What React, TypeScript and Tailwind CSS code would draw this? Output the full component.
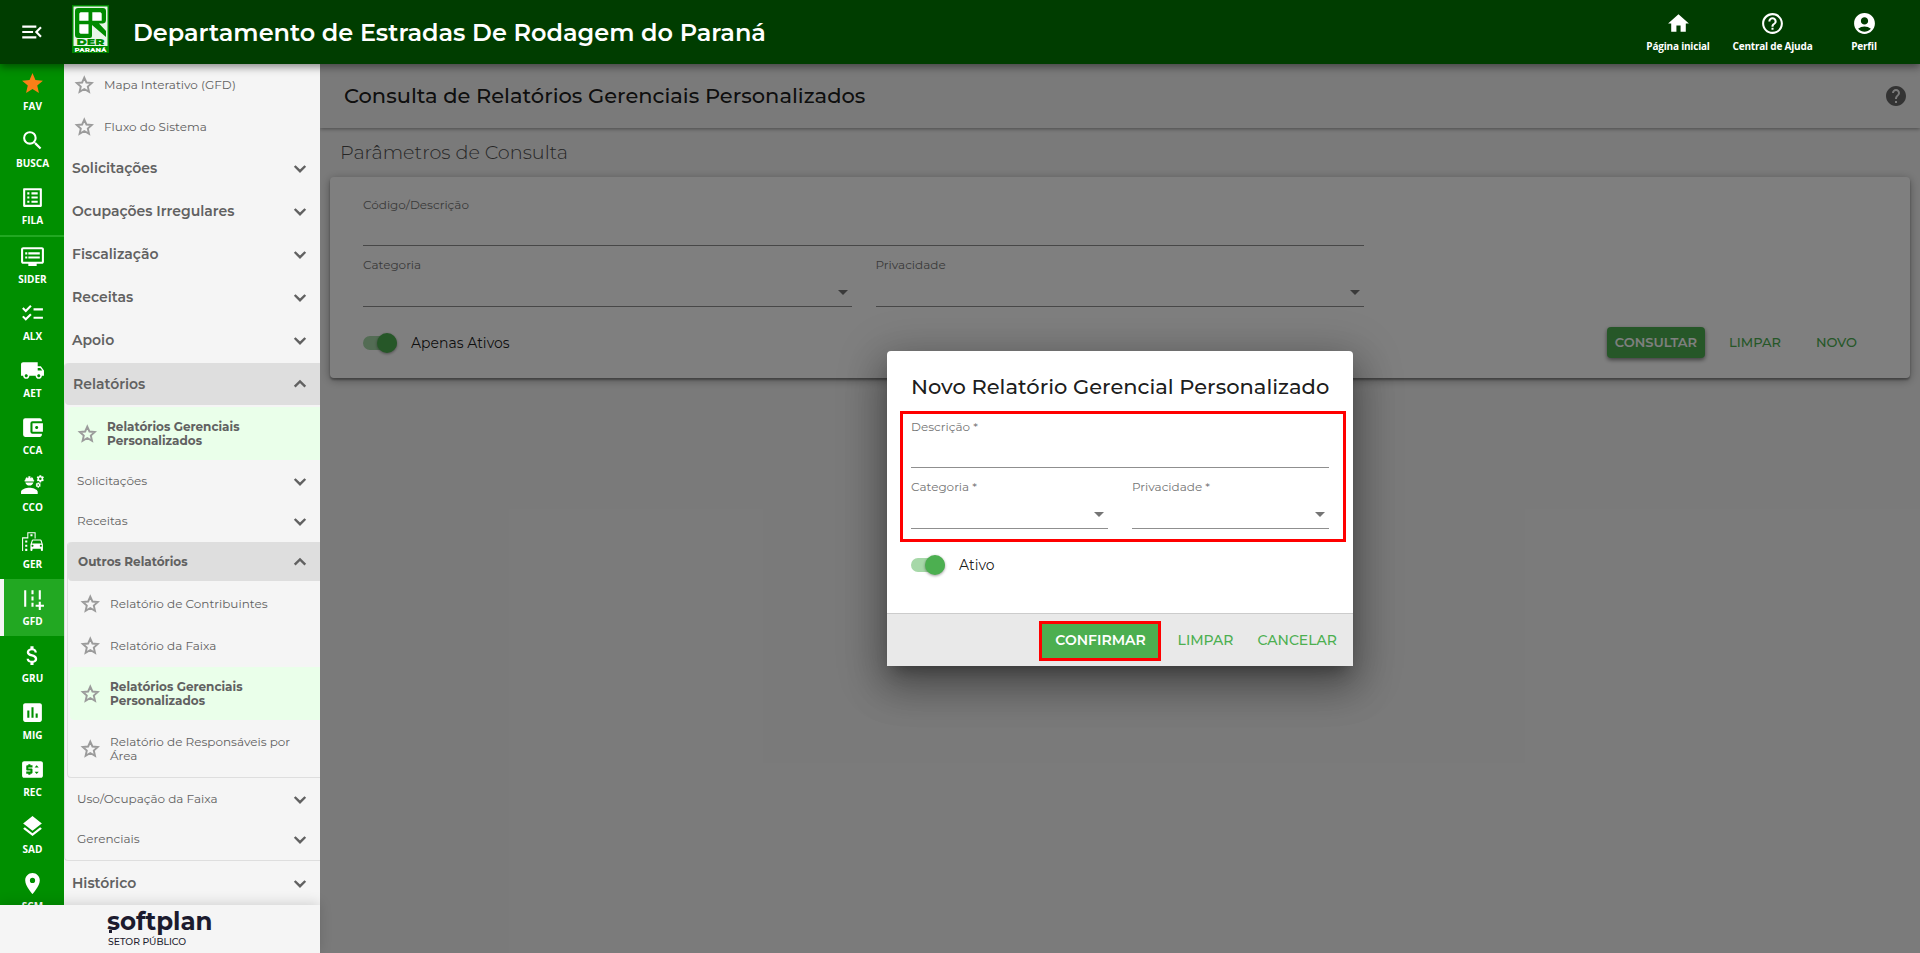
import type { ReactNode } from "react";
import type { IconType } from "react-icons";
import {
  MdAccountBalanceWallet,
  MdAccountCircle,
  MdAddRoad,
  MdArrowDropDown,
  MdAttachMoney,
  MdChecklist,
  MdDvr,
  MdEngineering,
  MdHelp,
  MdHelpOutline,
  MdHome,
  MdInsertChart,
  MdLayers,
  MdListAlt,
  MdLocalShipping,
  MdMenuOpen,
  MdOutlineEmojiTransportation,
  MdPlace,
  MdPriceChange,
  MdSearch,
  MdStar,
} from "react-icons/md";

type RailEntry = { label: string; icon: IconType; active?: boolean; color?: string };

const shortcuts: RailEntry[] = [
  { label: "FAV", icon: MdStar, color: "text-[#fb7f17]" },
  { label: "BUSCA", icon: MdSearch },
  { label: "FILA", icon: MdListAlt },
];

const modules: RailEntry[] = [
  { label: "SIDER", icon: MdDvr },
  { label: "ALX", icon: MdChecklist },
  { label: "AET", icon: MdLocalShipping },
  { label: "CCA", icon: MdAccountBalanceWallet },
  { label: "CCO", icon: MdEngineering },
  { label: "GER", icon: MdOutlineEmojiTransportation },
  { label: "GFD", icon: MdAddRoad, active: true },
  { label: "GRU", icon: MdAttachMoney },
  { label: "MIG", icon: MdInsertChart },
  { label: "REC", icon: MdPriceChange },
  { label: "SAD", icon: MdLayers },
  { label: "SCM", icon: MdPlace },
];

const RailItem = ({ label, icon: Icon, active, color }: RailEntry) => (
  <div
    className={
      active
        ? "flex h-[57px] shrink-0 flex-col items-center border-l-4 border-[#f5f5f5] bg-[#22a822] pt-[7px] pr-[3px]"
        : "flex h-[57px] shrink-0 flex-col items-center pt-[7px] pl-px"
    }
  >
    <Icon className={color ?? "text-white"} size={25} />
    <span className="mt-[3px] font-['Open_Sans',sans-serif] text-[10px] leading-[14px] font-bold text-white">
      {label}
    </span>
  </div>
);

const Chevron = ({ up }: { up?: boolean }) => (
  <svg width="18" height="18" viewBox="0 0 18 18" fill="none" stroke="currentColor" strokeWidth="2.400" className="shrink-0">
    <path d={up ? "M3.700 11.700 9 6.500l5.300 5.200" : "M3.700 7 9 12.200 14.300 7"} />
  </svg>
);

const StarOutline = () => (
  <svg width="20" height="20" viewBox="0 0 20 20" fill="none" stroke="#9b9b9b" strokeWidth="1.900" className="shrink-0">
    <path d="M10.300 2.600l2.150 4.900 5.350.5-4 3.550 1.200 5.200L10.300 14l-4.700 2.750 1.200-5.200-4-3.550 5.350-.5z" />
  </svg>
);

const Logo = () => (
  <svg width="37" height="48" viewBox="0 0 37 48">
    <rect width="37" height="48" fill="#008a00" />
    <path d="M1.500 1.500h34v39.500h-34z" fill="#e9f5e9" />
    <path d="M6 3h25a3 3 0 0 1 3 3v9a3.500 3.500 0 0 1-3 3.500h-4L34 26v6L20 20v11a2 2 0 0 1-2 2H6a3 3 0 0 1-3-3V6a3 3 0 0 1 3-3z" fill="#008a00" />
    <path d="M8.500 7.300h8v8.400H7.300V8.500zM20.300 7.300h8.200l1.200 1.200v7.200h-9.400zM7.300 19.200h9.200v9.600H8.500l-1.200-1.200z" fill="#fff" />
    <text x="18.500" y="40" textAnchor="middle" textLength="28" lengthAdjust="spacingAndGlyphs" fontFamily="Montserrat, Inter, sans-serif" fontSize="9.500" fontWeight="900" fill="#008a00">DER</text>
    <text x="18.500" y="46.500" textAnchor="middle" textLength="32" lengthAdjust="spacingAndGlyphs" fontFamily="Montserrat, Inter, sans-serif" fontSize="5.500" fontWeight="800" fill="#fff">PARANÁ</text>
  </svg>
);

const HeaderAction = ({ icon: Icon, label }: { icon: IconType; label: string }) => (
  <div className="flex flex-col items-center pt-[11px]">
    <Icon size={25} />
    <span className="mt-[3px] font-['Open_Sans',sans-serif] text-[10px] leading-[14px] font-bold tracking-[-0.2px] whitespace-nowrap">
      {label}
    </span>
  </div>
);

const Header = () => (
  <header className="relative z-20 flex h-16 shrink-0 bg-[#003d00] text-white shadow-[0_3px_8px_rgba(0,0,0,0.45)]">
    <div className="flex w-16 items-center justify-center">
      <MdMenuOpen size={26} />
    </div>
    <div className="ml-2 pt-[5px]">
      <Logo />
    </div>
    <h1 className="ml-6 text-2xl leading-[66px] font-semibold">
      Departamento de Estradas De Rodagem do Paraná
    </h1>
    <div className="ml-auto flex">
      <div className="w-[94px]"><HeaderAction icon={MdHome} label="Página inicial" /></div>
      <div className="w-[95px]"><HeaderAction icon={MdHelpOutline} label="Central de Ajuda" /></div>
      <div className="mr-3 w-[88px]"><HeaderAction icon={MdAccountCircle} label="Perfil" /></div>
    </div>
  </header>
);

const Group = ({ label }: { label: string }) => (
  <div className="flex h-[43px] shrink-0 items-center justify-between pr-[11px] pl-2">
    <span className="text-sm font-semibold">{label}</span>
    <Chevron />
  </div>
);

const SubGroup = ({ label }: { label: string }) => (
  <div className="flex h-10 shrink-0 items-center justify-between pr-[11px] pl-3 text-xs">
    <span>{label}</span>
    <Chevron />
  </div>
);

const Leaf = ({ children }: { children: ReactNode }) => (
  <div className="flex h-[42px] shrink-0 items-center gap-[10px] pl-[10px] text-xs leading-[14px]">
    <StarOutline />
    <span>{children}</span>
  </div>
);

const NavPanel = () => (
  <nav className="flex w-64 flex-col overflow-hidden bg-[#f5f5f5] text-[#616161]">
    <Leaf>Mapa Interativo (GFD)</Leaf>
    <Leaf>Fluxo do Sistema</Leaf>
    <div className="-mt-[2px] mb-[2px]">
      <Group label="Solicitações" />
      <Group label="Ocupações Irregulares" />
      <Group label="Fiscalização" />
      <Group label="Receitas" />
      <Group label="Apoio" />
    </div>

    <div className="flex flex-col rounded-l border-b border-l border-[#dedede]">
      <div className="flex h-[42px] items-center justify-between rounded-l bg-[#dedede] pr-[11px] pl-2">
        <span className="text-sm font-semibold">Relatórios</span>
        <Chevron up />
      </div>
      <div className="mt-[2px] ml-[3px] flex h-[53px] items-center gap-[10px] rounded-l bg-[#eaffea] pl-[9px] text-xs leading-[14px] font-bold">
        <StarOutline />
        <span>Relatórios Gerenciais<br />Personalizados</span>
      </div>
      <div className="mt-px">
        <SubGroup label="Solicitações" />
        <SubGroup label="Receitas" />
      </div>
      <div className="mt-px ml-[2px] flex flex-col rounded-l border-b border-l border-[#dedede]">
        <div className="flex h-[39px] items-center justify-between rounded-l bg-[#dedede] pr-[11px] pl-[10px] text-xs font-bold">
          <span>Outros Relatórios</span>
          <Chevron up />
        </div>
        <div className="pt-[2px] pl-[2px]">
          <Leaf>Relatório de Contribuintes</Leaf>
          <Leaf>Relatório da Faixa</Leaf>
          <div className="flex h-[53px] items-center gap-[10px] rounded-l bg-[#eaffea] pl-[10px] text-xs leading-[14px] font-bold">
            <StarOutline />
            <span>Relatórios Gerenciais<br />Personalizados</span>
          </div>
          <div className="flex h-[57px] items-center gap-[10px] pl-[10px] text-xs leading-[14px]">
            <StarOutline />
            <span>Relatório de Responsáveis por<br />Área</span>
          </div>
        </div>
      </div>
      <div className="mt-px mb-px">
        <SubGroup label="Uso/Ocupação da Faixa" />
        <SubGroup label="Gerenciais" />
      </div>
    </div>
    <Group label="Histórico" />
  </nav>
);

const Field = ({ label, select }: { label: string; select?: boolean }) => (
  <div className="flex min-w-0 flex-1 flex-col border-b border-[#8f8f8f] text-xs text-[#757575]">
    <span className="leading-4">{label}</span>
    <div className={select ? "flex h-[33px] items-end justify-end pb-[2px]" : "h-8"}>
      {select && <MdArrowDropDown size={24} className="-mr-[3px]" />}
    </div>
  </div>
);

const Toggle = ({ label }: { label: string }) => (
  <div className="flex items-center gap-[14px] text-sm text-black/90">
    <div className="flex h-[14px] w-[34px] items-center justify-end rounded-full bg-[#a6d8a8]">
      <div className="size-5 shrink-0 rounded-full bg-[#4caf50] shadow-[0_1px_3px_rgba(0,0,0,0.4)]" />
    </div>
    <span>{label}</span>
  </div>
);

const ReportSearch = () => (
  <main className="relative z-0 flex flex-1 flex-col bg-[#f5f5f5]">
    <div className="flex h-16 shrink-0 items-center justify-between pr-[12px] pl-6 shadow-[0_1px_4px_rgba(0,0,0,0.4)]">
      <h2 className="text-[21px] font-medium text-black/90">Consulta de Relatórios Gerenciais Personalizados</h2>
      <MdHelp size={24} className="text-[#666666]" />
    </div>
    <h3 className="mt-[10px] ml-5 text-[19.2px] leading-7 font-light text-[#4d4d4d]">Parâmetros de Consulta</h3>
    <section className="mx-[10px] mt-[11px] h-[201px] rounded-[4px] bg-white px-[33px] pt-5 shadow-[0_2px_10px_rgba(0,0,0,0.35),0_2px_2px_rgba(0,0,0,0.3)]">
      <div className="flex w-[1001px] flex-col">
        <Field label="Código/Descrição" />
        <div className="mt-[11px] flex gap-6">
          <Field label="Categoria" select />
          <Field label="Privacidade" select />
        </div>
      </div>
      <div className="mt-5 flex items-center justify-between">
        <Toggle label="Apenas Ativos" />
        <div className="flex items-center text-[13px] font-medium text-[#4caf50]">
          <button className="h-[31px] w-[98px] rounded-[4px] bg-[#4caf50] font-semibold text-white shadow-[0_2px_4px_rgba(0,0,0,0.5)]">
            CONSULTAR
          </button>
          <button className="ml-6">LIMPAR</button>
          <button className="mr-5 ml-[35px]">NOVO</button>
        </div>
      </div>
    </section>
    <div className="absolute inset-0 bg-black/50" />
  </main>
);

const NewReportDialog = () => (
  <div className="absolute top-[351px] left-[887px] z-30 flex h-[315px] w-[466px] flex-col rounded-t-[4px] bg-white shadow-[0_11px_15px_-7px_rgba(0,0,0,0.3),0_20px_38px_3px_rgba(0,0,0,0.24),0_9px_46px_8px_rgba(0,0,0,0.2)]">
    <h2 className="pt-[22px] pl-6 text-[21px] leading-[28px] font-medium whitespace-nowrap text-black/90">
      Novo Relatório Gerencial Personalizado
    </h2>
    <div className="mt-[10px] ml-[13px] h-[131px] w-[446px] border-3 border-[#ff0000] pt-[5px] pr-[14px] pl-2">
      <div className="flex flex-col">
        <Field label="Descrição *" />
        <div className="mt-[11px] flex gap-6">
          <Field label="Categoria *" select />
          <Field label="Privacidade *" select />
        </div>
      </div>
    </div>
    <div className="mt-[13px] ml-6">
      <Toggle label="Ativo" />
    </div>
    <div className="mt-auto flex h-[53px] items-start justify-end border-t border-[#cccccc] bg-[#e9e9e9] pt-[7px] text-sm font-medium text-[#4caf50]">
      <button className="h-10 w-[122px] border-3 border-[#ff0000] bg-[#4caf50] pb-[2px] pl-[2px] font-semibold text-white">
        CONFIRMAR
      </button>
      <button className="ml-[17px] h-[38px]">LIMPAR</button>
      <button className="mr-4 ml-6 h-[38px]">CANCELAR</button>
    </div>
  </div>
);

const App = () => (
  <div className="relative flex h-[953px] w-[1920px] flex-col overflow-hidden font-[Montserrat,Inter,sans-serif]">
    <Header />
    <div className="flex min-h-0 flex-1">
      <aside className="relative z-10 flex w-80 flex-col">
        <div className="flex h-[841px] overflow-hidden">
          <div className="flex w-16 flex-col overflow-hidden bg-[#008f00]">
            {shortcuts.map((entry) => (
              <RailItem key={entry.label} {...entry} />
            ))}
            <div className="h-[2px] shrink-0 bg-[#22a822]" />
            {modules.map((entry) => (
              <RailItem key={entry.label} {...entry} />
            ))}
          </div>
          <NavPanel />
        </div>
        <footer className="h-12 bg-[#f5f5f5] pl-[107px] text-[#1c1b2e] shadow-[0_-2px_12px_rgba(0,0,0,0.14)]">
          <div className="relative text-[24.5px] leading-[33px] font-bold">
            softplan
            <span className="absolute top-[25px] left-[2px] size-[3px] bg-[#1c1b2e]" />
          </div>
          <div className="pl-px text-[9.3px] leading-[8px] font-medium">SETOR PÚBLICO</div>
        </footer>
      </aside>
      <ReportSearch />
    </div>
    <NewReportDialog />
  </div>
);

export default App;
